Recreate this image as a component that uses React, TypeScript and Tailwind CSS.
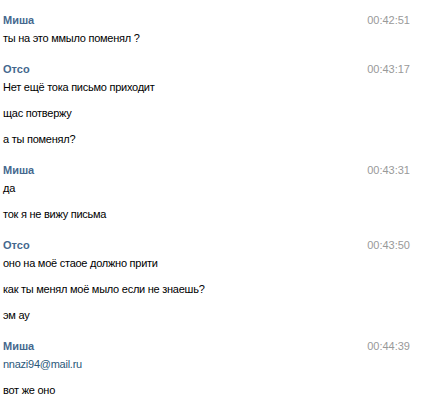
import React from "react";

interface Group {
  name: string;
  time: string;
  lines: { text: string; link?: boolean }[];
}

const groups: Group[] = [
  { name: "Миша", time: "00:42:51", lines: [{ text: "ты на это ммыло поменял ?" }] },
  {
    name: "Отсо",
    time: "00:43:17",
    lines: [{ text: "Нет ещё тока письмо приходит" }, { text: "щас потвержу" }, { text: "а ты поменял?" }],
  },
  { name: "Миша", time: "00:43:31", lines: [{ text: "да" }, { text: "ток я не вижу письма" }] },
  {
    name: "Отсо",
    time: "00:43:50",
    lines: [
      { text: "оно на моё стаое должно прити" },
      { text: "как ты менял моё мыло если не знаешь?" },
      { text: "эм ау" },
    ],
  },
  {
    name: "Миша",
    time: "00:44:39",
    lines: [{ text: "nnazi94@mail.ru", link: true }, { text: "вот же оно" }],
  },
];

const App: React.FC = () => {
  return (
    <div
      className="w-[422px] h-[402px] bg-white overflow-hidden pt-[13px] pl-[3px] pr-[12px] text-[11px] text-black"
      style={{ fontFamily: '"Liberation Sans", Arial, sans-serif' }}
    >
      {groups.map((g, i) => (
        <div key={i} className={i > 0 ? "mt-[17px]" : ""}>
          <div className="flex justify-between items-center h-[14px] leading-[14px]">
            <span className="font-bold text-[#45688e]">{g.name}</span>
            <span className="text-[#999999]">{g.time}</span>
          </div>
          <div className="mt-[4px] flex flex-col gap-[12px] tracking-[-0.25px]">
            {g.lines.map((l, j) => (
              <div key={j} className="h-[14px] leading-[14px]">
                {l.link ? <a className="text-[#2b587a]">{l.text}</a> : l.text}
              </div>
            ))}
          </div>
        </div>
      ))}
    </div>
  );
};

export default App;
